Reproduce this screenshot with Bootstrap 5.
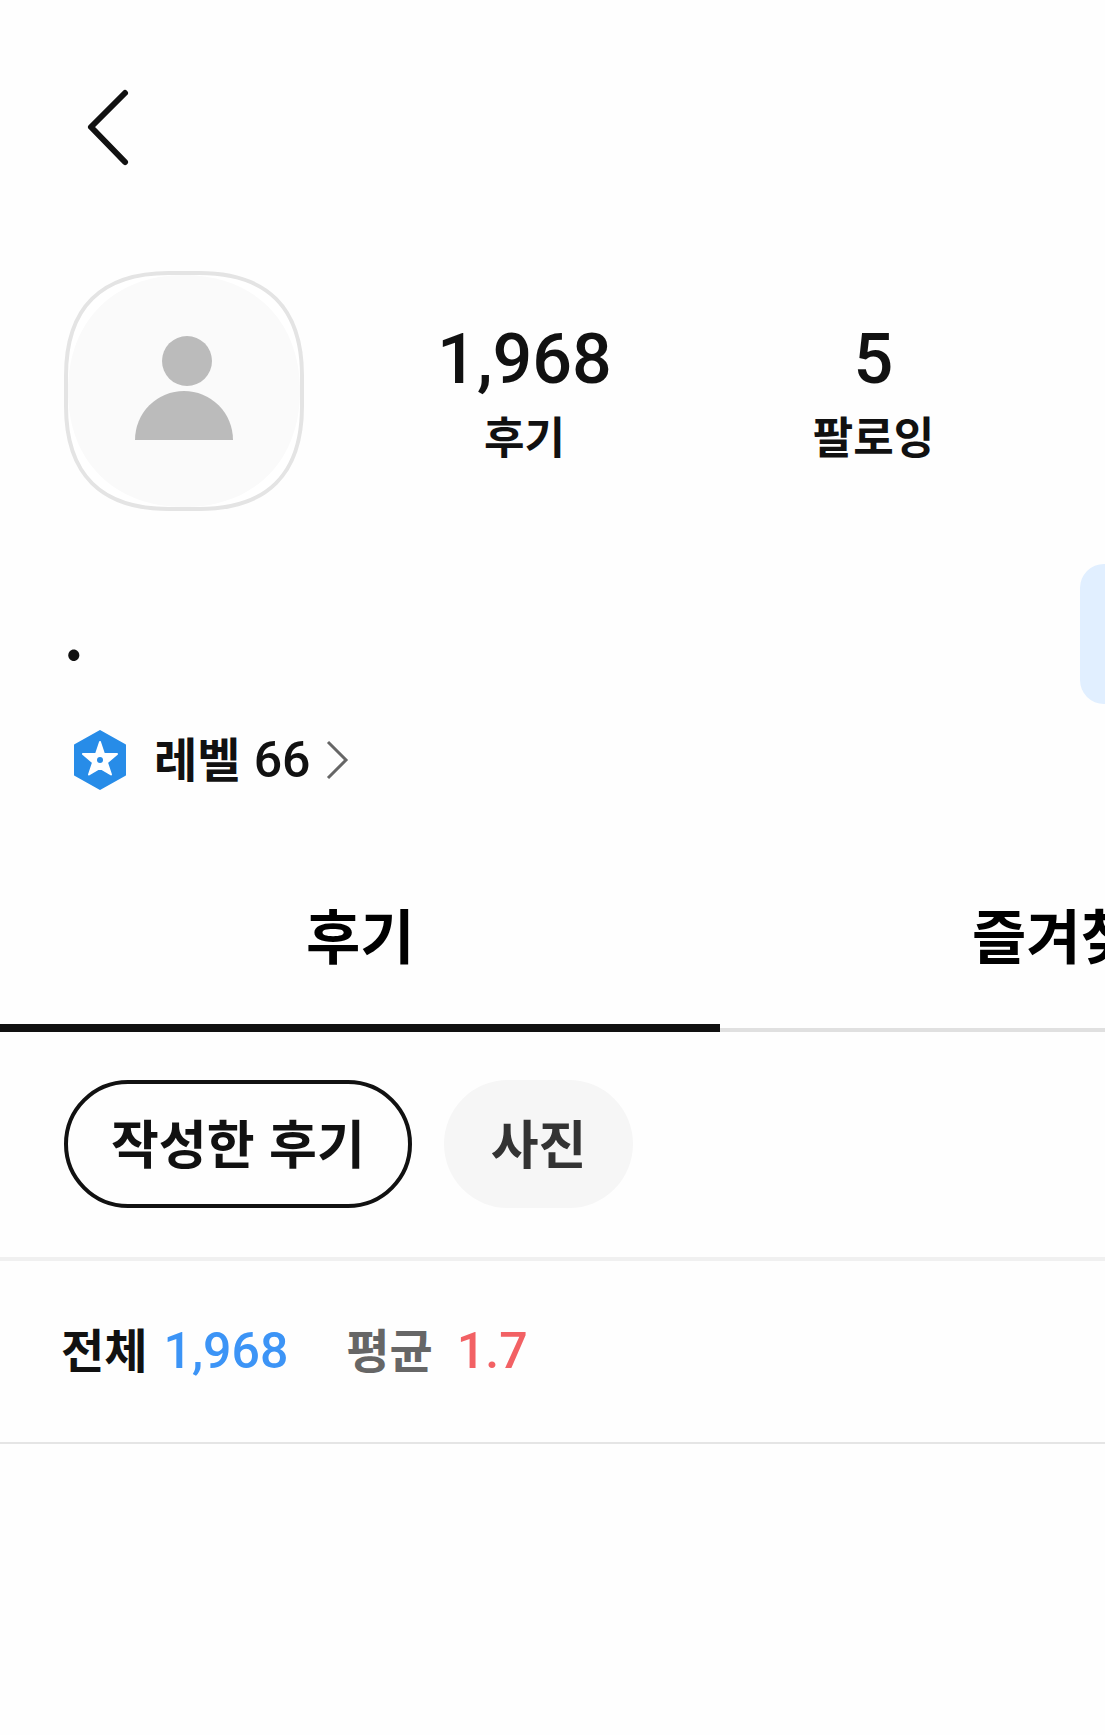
<!DOCTYPE html>
<html lang="ko">
<head>
<meta charset="utf-8">
<meta name="viewport" content="width=device-width, initial-scale=1">
<title>프로필</title>
<link rel="stylesheet" href="https://cdn.jsdelivr.net/npm/bootstrap@5.3.0/dist/css/bootstrap.min.css">
<style>
  body { font-family: "Noto Sans CJK KR", sans-serif; font-weight: 700; color: #111; background: #fefefe; overflow-x: hidden; }
  .gutter { padding-left: 64px; padding-right: 64px; }
  .topbar { padding-top: 84px; padding-bottom: 101px; }
  .back-btn svg, .avatar, .level-link svg { display: block; }
  .digits { font-family: Roboto, sans-serif; font-weight: 500; }
  .stat-list { padding-left: 46px; }
  .stat-item { width: 349px; color: #111; }
  .stat-num { font-size: 70px; line-height: 88px; padding-top: 4px; }
  .stat-label { font-size: 44px; line-height: 64px; margin-bottom: 4px; }
  .name-row { margin-top: 53px; height: 140px; overflow: hidden; }
  .user-name { font-size: 60px; line-height: 72px; font-weight: 700; }
  .follow-btn { width: 300px; height: 140px; margin-right: -275px; border-radius: 24px; background: #e1efff; border: 0; }
  .level-link { color: #111; font-size: 47px; line-height: 60px; gap: 14px; margin-top: 26px; }
  .level-link .hex { margin: 0 14px 0 10px; }
  .level-text { margin-top: -4px; }
  .level-link .digits, .summary .digits { font-size: 50px; }
  .tab-strip { margin-top: 86px; box-shadow: inset 0 -4px #e0e0e0; overflow: hidden; }
  .tab-btn { width: 65.2%; height: 156px; padding: 0 0 32px; border: 0; border-bottom: 8px solid transparent; background: none; color: #000; font-size: 59px; line-height: 80px; font-weight: 700; }
  .tab-btn.active { border-bottom-color: #111; }
  .chip-row { gap: 32px; padding-top: 48px; padding-bottom: 49px; border-bottom: 4px solid #f0f0f0; }
  .chip { height: 128px; padding: 0 47px 4px; border-radius: 64px; font-size: 52px; line-height: 60px; font-weight: 700; border: 0; background: #f6f6f6; color: #333; }
  .chip.active { background: #fefefe; color: #111; border: 4px solid #111; padding: 0 43px 4px; }
  .summary { font-size: 47px; line-height: 72px; padding: 51px 61px 55px; border-bottom: 2px solid #e5e5e5; }
  .total { color: #3c94f6; margin-left: 16px; }
  .avg-label { color: #666; margin-left: 58px; }
  .avg { color: #f26164; margin-left: 24px; }
</style>
</head>
<body>
<header class="topbar gutter d-flex">
  <button type="button" class="back-btn btn p-0 border-0" aria-label="뒤로">
    <svg width="88" height="86" viewBox="0 0 88 86" fill="none" stroke="#111" stroke-width="6" stroke-linecap="round" stroke-linejoin="round"><path d="M61 9 27 43 61 78"/></svg>
  </button>
</header>
<main>
  <section class="gutter d-flex align-items-center">
    <svg class="avatar flex-shrink-0" width="240" height="240" viewBox="0 0 240 240" role="img" aria-label="프로필 사진">
      <path d="M105 2H135C203 2 238 37 238 105V135C238 203 203 238 135 238H105C37 238 2 203 2 135V105C2 37 37 2 105 2Z" fill="#fff" stroke="#e4e4e4" stroke-width="4"/>
      <path d="M120 4C190 4 236 50 236 120S190 236 120 236 4 190 4 120 50 4 120 4Z" fill="#fafafa"/>
      <circle cx="123" cy="90" r="25" fill="#bbb"/>
      <path d="M71 169a49 49 0 0 1 98 0Z" fill="#bbb"/>
    </svg>
    <div class="stat-list d-flex">
      <a href="#reviews" class="stat-item d-flex flex-column align-items-center text-decoration-none"><span class="stat-num digits">1,968</span><span class="stat-label">후기</span></a>
      <a href="#following" class="stat-item d-flex flex-column align-items-center text-decoration-none"><span class="stat-num digits">5</span><span class="stat-label">팔로잉</span></a>
    </div>
  </section>
  <section>
    <div class="name-row gutter pe-0 d-flex align-items-center justify-content-between">
      <h1 class="user-name mb-0">.</h1>
      <button type="button" class="follow-btn flex-shrink-0" aria-label="팔로우"></button>
    </div>
    <div class="gutter d-flex">
      <a href="#level" class="level-link d-flex align-items-center text-decoration-none">
        <svg class="hex" width="52" height="60" viewBox="0 0 52 60"><path d="M26 1 51 15V45L26 59 1 45V15Z" fill="#278ce8" stroke="#278ce8" stroke-width="2" stroke-linejoin="round"/><path d="M26 12 30 24 43 24 33 32.500 37 44.500 26 38 15 44.500 19 32.500 9 24 22 24Z" fill="#fff" stroke="#fff" stroke-width="2" stroke-linejoin="round"/><circle cx="26" cy="30" r="3" fill="#278ce8"/></svg>
        <span class="level-text">레벨 <span class="digits">66</span></span>
        <svg width="30" height="44" viewBox="0 0 30 44" fill="none" stroke="#666" stroke-width="3"><path d="M4 4 22 22 4 40"/></svg>
      </a>
    </div>
  </section>
  <div class="tab-strip d-flex" role="tablist">
    <button type="button" class="tab-btn active flex-shrink-0" role="tab" aria-selected="true">후기</button>
    <button type="button" class="tab-btn flex-shrink-0" role="tab" aria-selected="false">즐겨찾기</button>
  </div>
  <div class="chip-row gutter d-flex">
    <button type="button" class="chip active">작성한 후기</button>
    <button type="button" class="chip">사진</button>
  </div>
  <div class="summary d-flex align-items-baseline">
    <span>전체</span><span class="total digits">1,968</span>
    <span class="avg-label">평균</span><span class="avg digits">1.7</span>
  </div>
</main>
<script src="https://cdn.jsdelivr.net/npm/bootstrap@5.3.0/dist/js/bootstrap.bundle.min.js"></script>
</body>
</html>
